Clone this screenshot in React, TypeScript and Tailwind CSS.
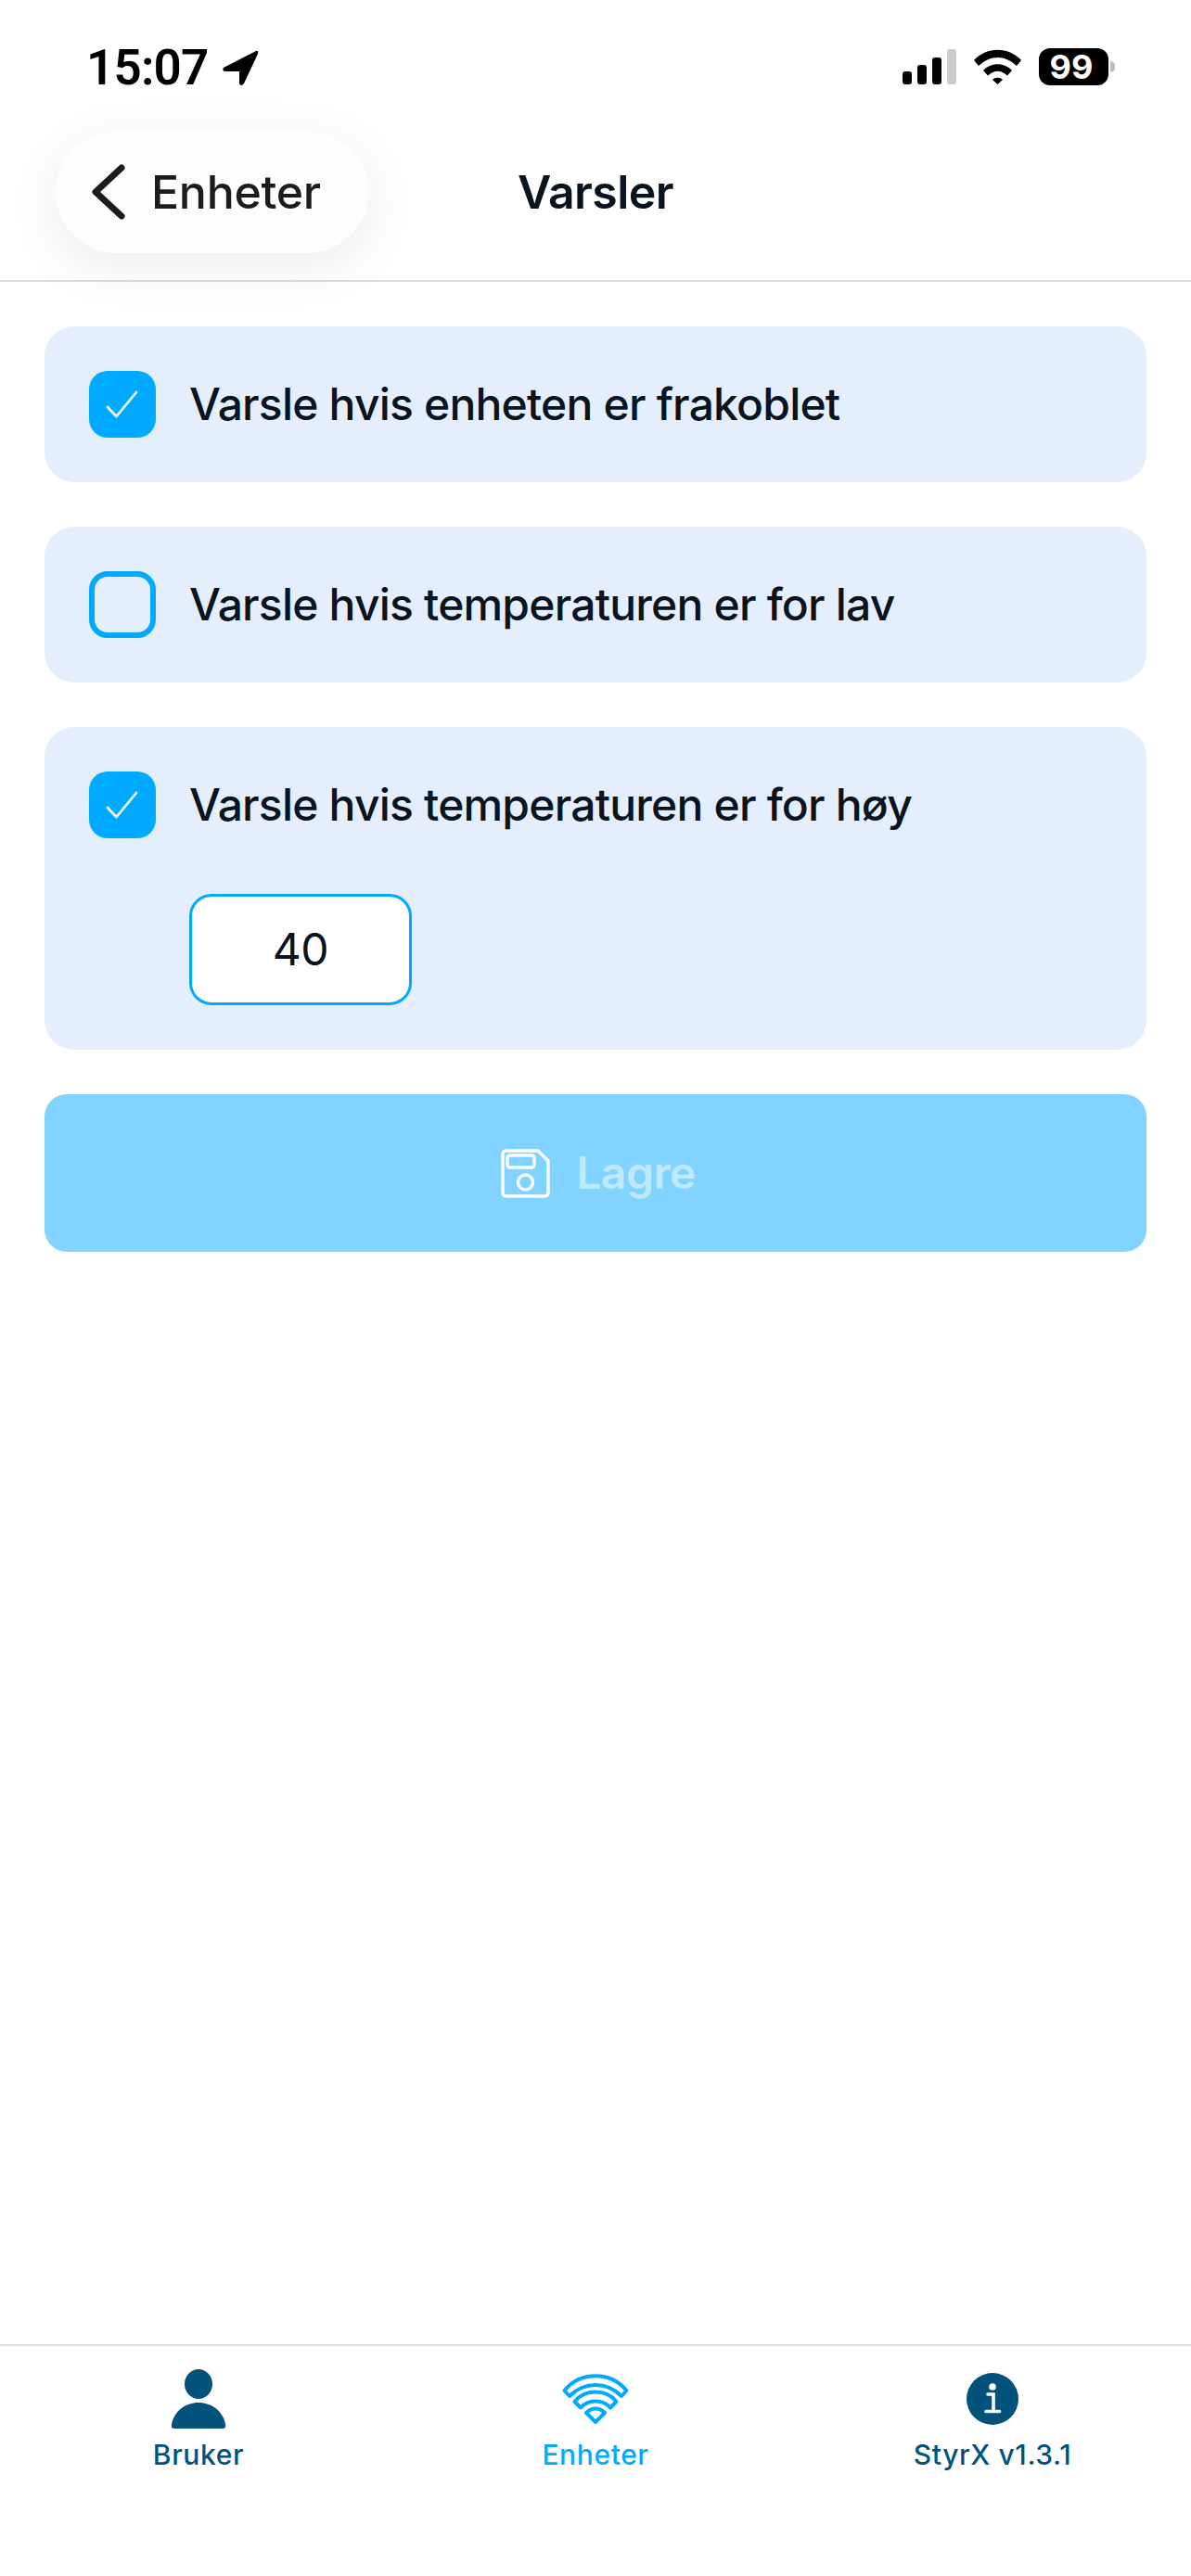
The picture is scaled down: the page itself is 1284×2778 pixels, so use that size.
import React from "react";

function Checkbox({ checked }: { checked: boolean }) {
  if (!checked) {
    return <div className="w-[72px] h-[72px] shrink-0 rounded-[20px] border-[6px] border-[#00AAFF]" />;
  }
  return (
    <div className="w-[72px] h-[72px] shrink-0 rounded-[20px] bg-[#00AAFF] flex items-center justify-center">
      <svg width="36" height="30" viewBox="0 0 36 30" fill="none">
        <path d="M2 18 L11.5 28 L33 2" stroke="#fff" strokeWidth="2.6" strokeLinecap="round" strokeLinejoin="round" />
      </svg>
    </div>
  );
}

function AlertRow({ label, checked }: { label: string; checked: boolean }) {
  return (
    <div className="flex items-center gap-[36px]">
      <Checkbox checked={checked} />
      <span className="text-[48px] leading-[72px] text-[#0A1420] tracking-[-0.8px] [font-weight:450]">{label}</span>
    </div>
  );
}

function StatusBar() {
  return (
    <div className="h-[141px] flex items-start justify-between pl-[93px] pr-[82px] pt-[45px]">
      <div className="flex items-center gap-[14px]">
        <span className="text-[53px] leading-[56px] font-semibold text-black tracking-[-0.8px] font-['Roboto',sans-serif]">15:07</span>
        <svg width="40" height="40" viewBox="0 0 40 40">
          <path d="M37 2 L2 20 Q0 24 4 24 L19 24 L19 37 Q21 41 24 37 L39 5 Q40 1 37 2 Z" fill="#000" />
        </svg>
      </div>
      <div className="flex items-center gap-[19px] pt-[7px]">
        <div className="flex items-end gap-[6px] h-[38px]">
          <div className="w-[10px] h-[14px] rounded-[3px] bg-black" />
          <div className="w-[10px] h-[21px] rounded-[3px] bg-black" />
          <div className="w-[10px] h-[29px] rounded-[3px] bg-black" />
          <div className="w-[10px] h-[38px] rounded-[3px] bg-[#CCCCCC]" />
        </div>
        <svg width="51" height="38" viewBox="0 0 51 38" fill="#000">
          <path d="M0 12 C14 -3 37 -3 51 12 L46 18 C33 6 18 6 5 18 Z" />
          <path d="M10 23 C18 14 33 14 41 23 L36 28.5 C29 22 22 22 15 28.5 Z" />
          <path d="M20 33 C23 30 28 30 31 33 L25.5 38 Z" />
        </svg>
        <div className="flex items-center gap-[2px]">
          <div className="w-[75px] h-[40px] rounded-[12px] bg-black flex items-center justify-center pr-[5px] text-white text-[36px] leading-none font-bold font-['Inter',sans-serif]">
            99
          </div>
          <div className="w-[5px] h-[12px] rounded-r-[6px] bg-[#BDBDBD]" />
        </div>
      </div>
    </div>
  );
}

function Header() {
  return (
    <div className="h-[163px] grid grid-cols-[1fr_auto_1fr] items-start border-b-2 border-[#DCDCDC] pl-[60px]">
      <div>
        <div className="relative z-10 w-[337px] h-[132px] rounded-[66px] bg-[#FDFDFD] shadow-[0_14px_60px_rgba(0,0,0,0.08)] flex items-center gap-[27px] pl-[38px]">
          <svg width="38" height="60" viewBox="0 0 38 60" fill="none">
            <path d="M33 4 L5 30 L33 56" stroke="#1C1C1E" strokeWidth="7" strokeLinecap="round" strokeLinejoin="round" />
          </svg>
          <span className="text-[50px] leading-[60px] text-[#1C1C1E] tracking-[-0.3px] [font-weight:450]">Enheter</span>
        </div>
      </div>
      <div className="h-[132px] flex items-center -translate-x-[30px]">
        <span className="text-[50px] leading-[60px] font-semibold text-[#0A1420] tracking-[-0.6px]">Varsler</span>
      </div>
      <div />
    </div>
  );
}

function SaveIcon() {
  return (
    <svg width="53" height="53" viewBox="0 0 53 53" fill="none" stroke="#fff" strokeWidth="3.4" strokeLinejoin="round">
      <path d="M6 2 H40 L51 13 V47 Q51 51 47 51 H6 Q2 51 2 47 V6 Q2 2 6 2 Z" />
      <rect x="7" y="7" width="29" height="13" rx="2.5" />
      <circle cx="26.5" cy="36" r="8" />
    </svg>
  );
}

function TabItem({ label, active, icon }: { label: string; active?: boolean; icon: React.ReactNode }) {
  return (
    <div className="flex flex-col items-center">
      <div className="h-[64px] flex items-center justify-center">{icon}</div>
      <span className={active ? "mt-[10px] text-[30px] leading-[36px] font-medium tracking-[0.6px] text-[#00AAFF]" : "mt-[10px] text-[30px] leading-[36px] font-medium tracking-[0.6px] text-[#02527C]"}>
        {label}
      </span>
    </div>
  );
}

export default function App() {
  return (
    <div className="h-[2778px] w-[1284px] bg-white flex flex-col overflow-hidden font-['Inter',sans-serif]">
      <StatusBar />
      <Header />

      <div className="flex-1 flex flex-col gap-12 px-12 pt-[48px]">
        <div className="rounded-[32px] bg-[#E4EEFD] p-12">
          <AlertRow label="Varsle hvis enheten er frakoblet" checked />
        </div>
        <div className="rounded-[32px] bg-[#E4EEFD] p-12">
          <AlertRow label="Varsle hvis temperaturen er for lav" checked={false} />
        </div>
        <div className="rounded-[32px] bg-[#E4EEFD] p-12">
          <AlertRow label="Varsle hvis temperaturen er for høy" checked />
          <div className="mt-[60px] ml-[108px] w-[240px] h-[120px] rounded-[24px] border-[3px] border-[#00AAFF] bg-white flex items-center justify-center text-[48px] text-[#0A1420] tracking-[-0.5px]">
            40
          </div>
        </div>
        <div className="h-[170px] rounded-[24px] bg-[#80D4FF] flex items-center justify-center gap-[28px] pl-[6px]">
          <SaveIcon />
          <span className="text-[48px] font-semibold text-[#BFE9FF] tracking-[-0.5px]">Lagre</span>
        </div>
      </div>

      <div className="h-[250px] border-t-2 border-[#DEDEDE] grid grid-cols-3 pt-[25px]">
        <TabItem
          label="Bruker"
          icon={
            <svg width="60" height="64" viewBox="0 0 60 64" fill="#02527C">
              <ellipse cx="30" cy="16" rx="15" ry="16" />
              <path d="M4 64 Q0 64 1 59 C4 45 16 36 30 36 C44 36 56 45 59 59 Q60 64 56 64 Z" />
            </svg>
          }
        />
        <TabItem
          label="Enheter"
          active
          icon={
            <svg width="72" height="54" viewBox="0 0 72 54" fill="none" stroke="#00AAFF" strokeWidth="4" strokeLinejoin="round">
              <path d="M2.5 18 C20 -3 52 -3 69.5 18 L64 24 C48 8 24 8 8 24 Z" />
              <path d="M13.5 30 C24 16 48 16 58.5 30 L52 36.5 C44 27 28 27 20 36.5 Z" />
              <path d="M26 42 C32 36 40 36 46 42 L36 52 Z" />
            </svg>
          }
        />
        <TabItem
          label="StyrX v1.3.1"
          icon={
            <svg width="56" height="56" viewBox="0 0 56 56">
              <circle cx="28" cy="28" r="28" fill="#02527C" />
              <circle cx="28" cy="15" r="3.8" fill="#fff" />
              <path d="M23 23 H29 V40 M21 41.5 H35.5" stroke="#fff" strokeWidth="3.6" strokeLinecap="round" fill="none" />
            </svg>
          }
        />
      </div>
    </div>
  );
}
